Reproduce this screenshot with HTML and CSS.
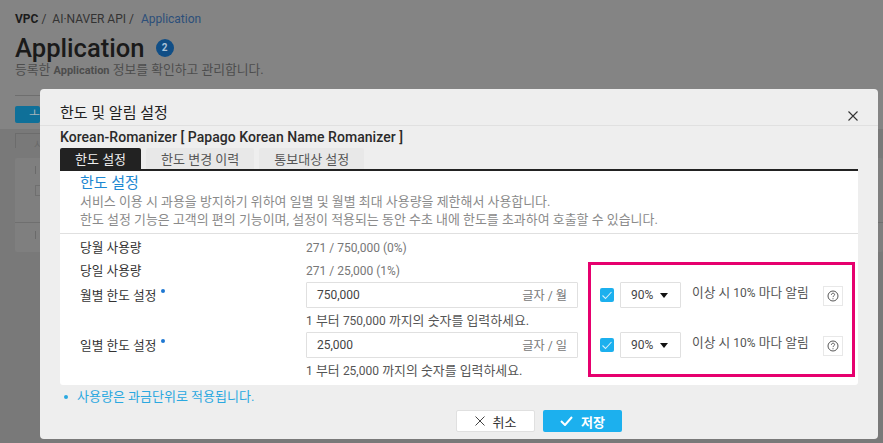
FILE: index.html
```html
<html>
    <head>
        <title>Application</title>
        <link rel="stylesheet" href="styles.css">
    </head>
    <body>
        <div class="page">
            <div class="crumbs"><b>VPC</b> / &nbsp;AI·NAVER API / &nbsp;<span class="crumbLast">Application</span></div>
            <div class="pageTitle">
                <h1>Application</h1>
                <span class="countBadge">2</span>
            </div>
            <p class="pageDesc">등록한 <b>Application</b> 정보를 확인하고 관리합니다.</p>
            <div class="pageRule"></div>
            <div class="pageButton">ㅗ</div>
            <div class="pageLower">
                <div class="pageFilter">시</div>
                <div class="pageTable">
                    <div class="pageRow first"><i class="tick"></i><i class="box"></i></div>
                    <div class="pageRow"><i class="tick"></i></div>
                </div>
            </div>
        </div>

        <div class="modal">
            <div class="modalHead">
                <span>한도 및 알림 설정</span>
                <svg class="closeIcon" width="10" height="10" viewBox="0 0 10 10"><path d="M.5.5l9 9M9.500.5l-9 9" stroke="#333" stroke-width="1.1" fill="none"/></svg>
            </div>
            <div class="modalBody">
                <div class="appName">Korean-Romanizer [ Papago Korean Name Romanizer ]</div>
                <div class="tabs">
                    <div class="tab active">한도 설정</div>
                    <div class="tab">한도 변경 이력</div>
                    <div class="tab">통보대상 설정</div>
                </div>
                <div class="intro">
                    <h2>한도 설정</h2>
                    <p>서비스 이용 시 과용을 방지하기 위하여 일별 및 월별 최대 사용량을 제한해서 사용합니다.</p>
                    <p>한도 설정 기능은 고객의 편의 기능이며, 설정이 적용되는 동안 수초 내에 한도를 초과하여 호출할 수 있습니다.</p>
                </div>
                <div class="panel">
                    <div class="usageRow"><span class="label">당월 사용량</span><span class="usage">271 / 750,000 (0%)</span></div>
                    <div class="usageRow"><span class="label">당일 사용량</span><span class="usage">271 / 25,000 (1%)</span></div>

                    <div class="limitRow">
                        <span class="label req">월별 한도 설정</span>
                        <div class="limitField">
                            <div class="inputBox"><span class="num">750,000</span><span class="unit">글자 / 월</span></div>
                            <div class="hint"><span class="num">1</span> 부터 <span class="num">750,000</span> 까지의 숫자를 입력하세요.</div>
                        </div>
                        <div class="alertBox">
                            <span class="check"><svg width="14" height="14" viewBox="0 0 14 14"><path d="M2.5 7.5l3 3 6-6.5" stroke="#d5eefa" stroke-width="1.1" fill="none"/></svg></span>
                            <span class="select">90%<i class="caret"></i></span>
                            <span class="alertText">이상 시 <span class="num">10%</span> 마다 알림</span>
                            <span class="help"><svg width="12" height="12" viewBox="0 0 12 12"><circle cx="6" cy="6" r="5" stroke="#555" fill="none"/><path d="M4.400 4.800c0-2.100 3.200-2.100 3.200-.2 0 1.200-1.600 1.200-1.600 2.500" stroke="#555" fill="none"/><path d="M5.500 8.200h1v1h-1z" fill="#555"/></svg></span>
                        </div>
                    </div>

                    <div class="limitRow">
                        <span class="label req">일별 한도 설정</span>
                        <div class="limitField">
                            <div class="inputBox"><span class="num">25,000</span><span class="unit">글자 / 일</span></div>
                            <div class="hint"><span class="num">1</span> 부터 <span class="num">25,000</span> 까지의 숫자를 입력하세요.</div>
                        </div>
                        <div class="alertBox">
                            <span class="check"><svg width="14" height="14" viewBox="0 0 14 14"><path d="M2.5 7.500l3 3 6-6.500" stroke="#d5eefa" stroke-width="1.1" fill="none"/></svg></span>
                            <span class="select">90%<i class="caret"></i></span>
                            <span class="alertText">이상 시 <span class="num">10%</span> 마다 알림</span>
                            <span class="help"><svg width="12" height="12" viewBox="0 0 12 12"><circle cx="6" cy="6" r="5" stroke="#555" fill="none"/><path d="M4.400 4.800c0-2.100 3.200-2.100 3.200-.2 0 1.200-1.600 1.200-1.600 2.500" stroke="#555" fill="none"/><path d="M5.500 8.200h1v1h-1z" fill="#555"/></svg></span>
                        </div>
                    </div>

                    <div class="highlight"></div>
                </div>
                <div class="note"><i class="noteDot"></i>사용량은 과금단위로 적용됩니다.</div>
                <div class="actions">
                    <div class="btn cancel"><svg width="10" height="10" viewBox="0 0 10 10"><path d="M.5.500l9 9M9.500.5l-9 9" stroke="#444" fill="none"/></svg>취소</div>
                    <div class="btn save"><svg width="13" height="10" viewBox="0 0 13 10"><path d="M1 5l4 4 7-8" stroke="#fff" stroke-width="2" fill="none"/></svg>저장</div>
                </div>
            </div>
        </div>
    </body>
</html>
```

FILE: styles.css
```css
html, body {
    padding: 0;
    margin: 0;
    height: 100%;
}
body {
    width: 883px;
    height: 443px;
    overflow: hidden;
    position: relative;
    background-color: #848484;
    font-family: Roboto, "Noto Sans CJK KR", sans-serif;
    color: #222;
}
h1, h2, p {
    margin: 0;
    font-weight: normal;
}
.num {
    font-size: 12px;
}

/* page behind the dialog */
.page {
    padding: 12px 0 0 15px;
}
.crumbs {
    font-size: 12px;
    line-height: 15px;
    color: #333;
}
.crumbs b {
    color: #1c1c1c;
}
.crumbLast {
    color: #2c4f7a;
    margin-left: 1px;
}
.pageTitle {
    display: flex;
    align-items: center;
    gap: 11px;
    margin-top: 7px;
    height: 28px;
}
.pageTitle h1 {
    font-size: 25.6px;
    font-weight: 500;
    color: #1a1a1a;
}
.countBadge {
    width: 18px;
    height: 18px;
    border-radius: 50%;
    background-color: #104e86;
    color: #a9c2d8;
    font-size: 10px;
    font-weight: 700;
    text-align: center;
    line-height: 18px;
}
.pageDesc {
    font-size: 12.8px;
    line-height: 16px;
    color: #4d4d4d;
}
.pageDesc b {
    font-size: 11px;
}
.pageRule {
    width: 25px;
    height: 1px;
    margin-top: 16px;
    background-color: #6e6e6e;
}
.pageButton {
    width: 25px;
    height: 17px;
    margin-top: 10px;
    background-color: #0f7099;
    border-radius: 2px;
    color: #a5b4ba;
    font-size: 12px;
    line-height: 17px;
    text-align: right;
}
.pageLower {
    position: absolute;
    left: 0;
    top: 129px;
    width: 883px;
    height: 314px;
    background-color: #797979;
    padding: 4px 0 0 15px;
    box-sizing: border-box;
}
.pageFilter {
    width: 60px;
    height: 12px;
    border: 1px solid #6c6c6c;
    border-bottom: none;
    font-size: 10px;
    color: #686868;
    padding: 2px 0 0 18px;
    box-sizing: content-box;
}
.pageTable {
    margin-top: 10px;
    width: 868px;
    background-color: #7f7f7f;
    border-radius: 2px;
}
.pageRow {
    height: 29px;
    position: relative;
    border-top: 1px solid #6f6f6f;
}
.pageRow.first {
    height: 64px;
    border-top: none;
}
.tick {
    position: absolute;
    left: 20px;
    top: 8px;
    width: 1px;
    height: 8px;
    background-color: #6a6a6a;
}
.box {
    position: absolute;
    left: 20px;
    top: 27px;
    width: 8px;
    height: 9px;
    border: 1px solid #6f6f6f;
}

/* dialog */
.modal {
    position: absolute;
    left: 40px;
    top: 89px;
    width: 838px;
    height: 350px;
    background-color: #eee;
    border-radius: 4px;
}
.modalHead {
    height: 37px;
    box-sizing: border-box;
    padding: 16px 20px 0;
    border-bottom: 1px solid #e0e0e0;
    font-size: 15px;
    line-height: 17px;
    color: #222;
    position: relative;
}
.closeIcon {
    position: absolute;
    right: 20px;
    top: 22px;
}
.modalBody {
    padding: 0 20px;
}
.appName {
    font-size: 14px;
    font-weight: 500;
    line-height: 22px;
    letter-spacing: 0.04px;
    color: #2a2a2a;
}
.tabs {
    display: flex;
    gap: 5px;
    border-bottom: 2px solid #222;
}
.tab {
    height: 21px;
    padding: 0 15px;
    background-color: #e8e8e8;
    font-size: 13px;
    line-height: 23px;
    color: #555;
    border-radius: 2px 2px 0 0;
}
.tab.active {
    background-color: #222;
    color: #eee;
}
.intro {
    background-color: #fff;
    padding: 2px 20px 0;
    height: 63px;
    box-sizing: border-box;
    border-bottom: 1px solid #e0e0e0;
}
.intro h2 {
    font-size: 15px;
    line-height: 20px;
    color: #1e88d2;
}
.intro p {
    font-size: 12.95px;
    line-height: 18px;
    color: #8a8a8a;
}
.panel {
    background-color: #fff;
    height: 151px;
    position: relative;
    padding: 2px 20px 0;
    box-sizing: border-box;
    border-radius: 0 0 3px 3px;
}
.usageRow {
    display: flex;
    height: 23px;
    align-items: center;
}
.label {
    width: 226px;
    flex: none;
    font-size: 12.7px;
    color: #333;
}
.usageRow .label {
    padding-bottom: 2px;
}
.usage {
    font-size: 12px;
    color: #777;
}
.limitRow {
    display: flex;
    height: 50px;
    align-items: flex-start;
}
.limitRow .label {
    line-height: 28px;
}
.req {
    position: relative;
}
.req::after {
    content: "";
    position: absolute;
    left: 81px;
    top: 7px;
    width: 4px;
    height: 4px;
    border-radius: 50%;
    background-color: #1e78d2;
}
.limitField {
    width: 272px;
    flex: none;
}
.inputBox {
    height: 26px;
    box-sizing: border-box;
    border: 1px solid #e0e0e0;
    border-radius: 1px;
    display: flex;
    justify-content: space-between;
    align-items: center;
    padding: 0 10px;
    font-size: 12.2px;
    color: #444;
}
.unit {
    color: #777;
}
.hint {
    font-size: 12.9px;
    line-height: 26px;
    color: #555;
}
.alertBox {
    display: flex;
    align-items: center;
    height: 26px;
    margin-left: 22px;
    font-size: 12.7px;
    color: #555;
}
.check {
    width: 14px;
    height: 14px;
    border-radius: 2px;
    background-color: #1cb0ee;
    display: flex;
}
.select {
    width: 61px;
    height: 26px;
    box-sizing: border-box;
    margin-left: 6px;
    border: 1px solid #e0e0e0;
    border-radius: 1px;
    display: flex;
    align-items: center;
    padding-left: 10px;
    gap: 7px;
    font-size: 12px;
    color: #444;
}
.caret {
    width: 0;
    height: 0;
    border-left: 4px solid transparent;
    border-right: 4px solid transparent;
    border-top: 5px solid #111;
}
.alertText {
    margin-left: 11px;
    width: 131px;
    flex: none;
    position: relative;
    top: -4px;
    white-space: nowrap;
}
.help {
    width: 20px;
    height: 20px;
    box-sizing: border-box;
    border: 1px solid #e8e8e8;
    display: flex;
    align-items: center;
    justify-content: center;
    position: relative;
    top: 1px;
}
.highlight {
    position: absolute;
    left: 528px;
    top: 28px;
    width: 267px;
    height: 115px;
    box-sizing: border-box;
    border: 3px solid #e6006e;
}
.note {
    display: flex;
    align-items: center;
    font-size: 13px;
    line-height: 16px;
    color: #2aa8e0;
    margin-top: 4px;
    padding-left: 4px;
}
.noteDot {
    width: 4px;
    height: 4px;
    border-radius: 50%;
    background-color: #2aa8e0;
    margin-right: 9px;
}
.actions {
    display: flex;
    justify-content: center;
    gap: 8px;
    margin-top: 5px;
    padding-left: 160px;
}
.btn {
    width: 79px;
    height: 22px;
    box-sizing: border-box;
    display: flex;
    align-items: center;
    justify-content: center;
    gap: 8px;
    font-size: 13px;
    border-radius: 2px;
}
.cancel {
    background-color: #fff;
    border: 1px solid #e0e0e0;
    color: #333;
}
.save {
    background-color: #1cb0ee;
    color: #fff;
    font-weight: 700;
}
```
